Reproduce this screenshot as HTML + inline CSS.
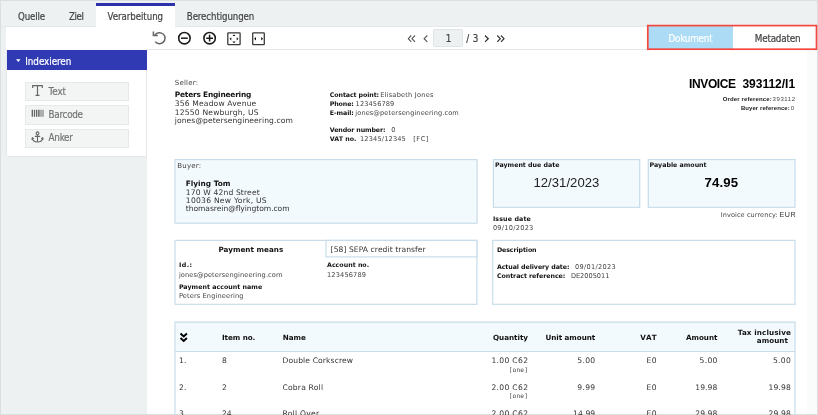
<!DOCTYPE html>
<html lang="de">
<head>
<meta charset="utf-8">
<title>Verarbeitung</title>
<style>
html,body{margin:0;padding:0}
body{width:818px;height:415px;overflow:hidden;background:#eef1f2;position:relative;font-family:'DejaVu Sans Condensed','DejaVu Sans','Liberation Sans',sans-serif}
.abs,.t{position:absolute}
.t{white-space:nowrap;line-height:1;-webkit-text-stroke:0.2px currentColor;font-family:'DejaVu Sans Condensed','DejaVu Sans','Liberation Sans',sans-serif}
#frame{left:0;top:0;width:816px;height:413px;border:1px solid #dcdfe0;pointer-events:none}
#tabbar{left:1px;top:1px;width:816px;height:25px;background:#eef1f2;border-bottom:1px solid #e6e9eb}
#tabactive{left:96px;top:3px;width:79px;height:24px;background:#fff;border-top:3px solid #2d31ae;box-sizing:border-box}
#toolbar{left:6px;top:27px;width:811px;height:23px;background:#fff}
#tbline{left:147px;top:49px;width:670px;height:1px;background:#e6e9eb}
#leftpanel{left:6px;top:50px;width:141px;height:107px;background:#fff;border:1px solid #e4e7e9;border-top:0;box-sizing:border-box;border-radius:0 0 2px 2px}
#lphead{left:6.5px;top:50px;width:140.5px;height:20px;background:#303ab2}
.btn{left:25px;width:104px;height:19px;background:#f3f5f5;border:1px solid #e6e9ea;box-sizing:border-box}
#doc{left:147px;top:50px;width:670px;height:364px;background:#fff}
#scroll{left:807px;top:50px;width:10px;height:364px;background:#fafbfb}
#pageinput{left:433px;top:29px;width:30px;height:18px;background:#eef1f2;border:1px solid #e0e4e6;border-radius:2px;box-sizing:border-box}
#redbox{left:647px;top:25px;width:170px;height:25px;background:#fff}
#dokbtn{left:648px;top:26px;width:85px;height:23px;background:#abdbf5}
svg{position:absolute;left:0;top:0}
</style>
</head>
<body>
<div class="abs" id="tabbar"></div>
<div class="abs" id="tabactive"></div>
<div class="abs" id="toolbar"></div>
<div class="abs" id="doc"></div>
<div class="abs" id="scroll"></div>
<div class="abs" id="tbline"></div>
<div class="abs" id="leftpanel"></div>
<div class="abs" id="lphead"></div>
<div class="abs btn" style="top:82px"></div>
<div class="abs btn" style="top:105px;height:20px"></div>
<div class="abs btn" style="top:129px"></div>
<div class="abs" id="pageinput"></div>
<div class="abs" id="redbox"></div>
<div class="abs" id="dokbtn"></div>
<div class="abs" id="frame"></div>
<div class="abs" id="uitext" style="left:0;top:0;width:818px;height:415px;will-change:transform">
<span class="t" style="left:18.0px;top:11.60px;font-size:9.6px;color:#444;letter-spacing:-0.138px">Quelle</span>
<span class="t" style="left:69.0px;top:11.60px;font-size:9.6px;color:#444;letter-spacing:-0.344px">Ziel</span>
<span class="t" style="left:107.6px;top:11.60px;font-size:9.6px;color:#444;letter-spacing:-0.033px">Verarbeitung</span>
<span class="t" style="left:186.8px;top:11.60px;font-size:9.6px;color:#444;letter-spacing:-0.083px">Berechtigungen</span>
<span class="t" style="left:25.3px;top:56.60px;font-size:9.8px;color:#fff;letter-spacing:-0.061px">Indexieren</span>
<span class="t" style="left:48.6px;top:86.90px;font-size:9.8px;color:#757575;letter-spacing:-0.080px">Text</span>
<span class="t" style="left:48.6px;top:109.70px;font-size:9.8px;color:#757575;letter-spacing:-0.288px">Barcode</span>
<span class="t" style="left:48.6px;top:132.80px;font-size:9.8px;color:#757575;letter-spacing:-0.280px">Anker</span>
<span class="t" style="left:466.2px;top:33.90px;font-size:9.8px;color:#444;letter-spacing:0.455px">/ 3</span>
<span class="t" style="left:445.8px;top:33.90px;font-size:9.8px;color:#444;letter-spacing:-1.009px">1</span>
<span class="t" style="left:668.4px;top:34.10px;font-size:9.8px;color:#fff;letter-spacing:-0.189px">Dokument</span>
<span class="t" style="left:754.8px;top:34.10px;font-size:9.8px;color:#444;letter-spacing:-0.207px">Metadaten</span>
</div>
<svg width="818" height="415" viewBox="0 0 818 415">
<!-- highlight frame -->
<rect x="647.8" y="25.6" width="168.7" height="23.6" fill="none" stroke="#f4483e" stroke-width="1.7"/>
<!-- UI icons -->
<g id="icons" fill="none" stroke="#111" stroke-width="1.5">
<path d="M16 59.3h4.6l-2.3 2.6z" fill="#fff" stroke="none"/>
<!-- rotate -->
<path d="M155.0 35.0a5.5 5.5 0 1 1 0.2 6.6" stroke="#666" stroke-width="1.5"/>
<path d="M153.4 31.4v4.2h4.4" stroke="#666" stroke-width="1.5"/>
<!-- zoom out -->
<g stroke="#1a1a1a" stroke-width="1.6">
<circle cx="184.4" cy="38.2" r="5.7"/><path d="M181 38.2h6.8" stroke-width="1.5"/>
<!-- zoom in -->
<circle cx="209.6" cy="38.2" r="5.7"/><path d="M206.2 38.2h6.8M209.6 34.8v6.8" stroke-width="1.5"/>
</g>
<!-- fit page -->
<rect x="227.8" y="32.9" width="12.3" height="11.7" rx="0.6" stroke="#3a3a3a" stroke-width="1.3"/>
<path d="M232.4 36.1l1.6-1.7 1.6 1.7zM232.4 41.5l1.6 1.7 1.6-1.7zM231.3 37.2l-1.7 1.6 1.7 1.6zM236.7 37.2l1.7 1.6-1.7 1.6z" fill="#111" stroke="none"/>
<!-- fit width -->
<rect x="252.7" y="32.9" width="11.6" height="11.7" rx="0.6" stroke="#3a3a3a" stroke-width="1.3"/>
<path d="M256 37.1l-1.9 1.7 1.9 1.7zM261.2 37.1l1.9 1.7-1.9 1.7z" fill="#111" stroke="none"/>
<!-- pager -->
<g stroke="#555" stroke-width="1.1">
<path d="M411.3 35.5l-3 3.2 3 3.2M415 35.5l-3 3.2 3 3.2"/>
<path d="M427.3 35.5l-3.2 3.2 3.2 3.2"/>
<path d="M485 35.5l3.2 3.2-3.2 3.2" stroke="#333" stroke-width="1.3"/>
<path d="M497.3 35.5l3 3.2-3 3.2M501 35.5l3 3.2-3 3.2" stroke="#333" stroke-width="1.2"/>
</g>
<!-- T icon -->
<g stroke="#666" stroke-width="1.1">
<path d="M32.7 87.9v-2.2h9.6v2.2M37.5 85.7v9.5M35.5 95.3h4" stroke-width="1.2"/>
<!-- barcode -->
<path d="M32.4 109.8v7M36.6 109.8v7M38.9 109.8v7" stroke-width="1.5"/><path d="M34.5 109.8v7M41 109.8v7M43 109.8v7" stroke-width="1"/>
<!-- anchor -->
<circle cx="37.5" cy="133.3" r="1.4"/>
<path d="M37.5 134.7v7.2M34.8 136.4h5.4M32.2 138.2c0.4 2.6 2.6 3.8 5.3 3.8s4.9-1.2 5.3-3.8M31.6 139.4l0.8-1.6 1.4 1M43.4 139.4l-0.8-1.6-1.4 1"/>
</g>
</g>
<!-- document -->
<g id="document">
<text x="174.8" y="84.5" font-family="'DejaVu Sans','Liberation Sans',sans-serif" font-size="7.0" fill="#444" textLength="23.3" lengthAdjust="spacing">Seller:</text>
<text x="174.8" y="97.0" font-family="'DejaVu Sans','Liberation Sans',sans-serif" font-size="7.4" font-weight="700" fill="#111" textLength="76.5" lengthAdjust="spacing">Peters Engineering</text>
<text x="174.8" y="105.8" font-family="'DejaVu Sans','Liberation Sans',sans-serif" font-size="7.6" fill="#333" textLength="81.5" lengthAdjust="spacing">356 Meadow Avenue</text>
<text x="174.8" y="114.5" font-family="'DejaVu Sans','Liberation Sans',sans-serif" font-size="7.6" fill="#333" textLength="83.7" lengthAdjust="spacing">12550 Newburgh, US</text>
<text x="174.8" y="123.0" font-family="'DejaVu Sans','Liberation Sans',sans-serif" font-size="7.6" fill="#333" textLength="118.0" lengthAdjust="spacing">jones@petersengineering.com</text>
<text x="329.8" y="96.6" font-family="'DejaVu Sans','Liberation Sans',sans-serif" font-size="6.3" font-weight="700" fill="#111" textLength="49.3" lengthAdjust="spacing">Contact point:</text>
<text x="380.2" y="96.6" font-family="'DejaVu Sans','Liberation Sans',sans-serif" font-size="6.6" fill="#444" textLength="53.2" lengthAdjust="spacing">Elisabeth Jones</text>
<text x="329.8" y="106.0" font-family="'DejaVu Sans','Liberation Sans',sans-serif" font-size="6.3" font-weight="700" fill="#111" textLength="24.0" lengthAdjust="spacing">Phone:</text>
<text x="355.6" y="106.0" font-family="'DejaVu Sans','Liberation Sans',sans-serif" font-size="6.6" fill="#444" textLength="38.7" lengthAdjust="spacing">123456789</text>
<text x="329.8" y="114.5" font-family="'DejaVu Sans','Liberation Sans',sans-serif" font-size="6.3" font-weight="700" fill="#111" textLength="24.1" lengthAdjust="spacing">E-mail:</text>
<text x="355.3" y="114.5" font-family="'DejaVu Sans','Liberation Sans',sans-serif" font-size="6.6" fill="#444" textLength="103.5" lengthAdjust="spacing">jones@petersengineering.com</text>
<text x="329.8" y="132.0" font-family="'DejaVu Sans','Liberation Sans',sans-serif" font-size="6.3" font-weight="700" fill="#111" textLength="55.7" lengthAdjust="spacing">Vendor number:</text>
<text x="391.3" y="132.0" font-family="'DejaVu Sans','Liberation Sans',sans-serif" font-size="6.6" fill="#444" textLength="4.1" lengthAdjust="spacing">0</text>
<text x="329.8" y="140.9" font-family="'DejaVu Sans','Liberation Sans',sans-serif" font-size="6.3" font-weight="700" fill="#111" textLength="26.7" lengthAdjust="spacing">VAT no.</text>
<text x="360.0" y="140.9" font-family="'DejaVu Sans','Liberation Sans',sans-serif" font-size="6.6" fill="#444" textLength="45.8" lengthAdjust="spacing">12345/12345</text>
<text x="413.3" y="140.9" font-family="'DejaVu Sans','Liberation Sans',sans-serif" font-size="6.6" fill="#444" textLength="15.0" lengthAdjust="spacing">[FC]</text>
<text x="689.0" y="87.8" font-family="'Liberation Sans','DejaVu Sans',sans-serif" font-size="12.0" font-weight="700" fill="#000" textLength="47.1" lengthAdjust="spacing">INVOICE</text>
<text x="742.4" y="87.8" font-family="'Liberation Sans','DejaVu Sans',sans-serif" font-size="12.0" font-weight="700" fill="#000" textLength="52.7" lengthAdjust="spacing">393112/I1</text>
<text x="722.7" y="101.3" font-family="'Liberation Sans','DejaVu Sans',sans-serif" font-size="6.0" font-weight="700" fill="#222" textLength="49.1" lengthAdjust="spacing">Order reference:</text>
<text x="772.6" y="101.3" font-family="'Liberation Sans','DejaVu Sans',sans-serif" font-size="6.0" fill="#444" textLength="22.5" lengthAdjust="spacing">393112</text>
<text x="740.9" y="110.3" font-family="'Liberation Sans','DejaVu Sans',sans-serif" font-size="6.0" font-weight="700" fill="#222" textLength="48.8" lengthAdjust="spacing">Buyer reference:</text>
<text x="790.8" y="110.3" font-family="'Liberation Sans','DejaVu Sans',sans-serif" font-size="6.0" fill="#444" textLength="3.9" lengthAdjust="spacing">0</text>
<rect x="175.0" y="159.6" width="302.0" height="63.6" fill="#f3fafe" stroke="#c8dce9" stroke-width="1.2"/>
<text x="177.3" y="167.7" font-family="'DejaVu Sans','Liberation Sans',sans-serif" font-size="7.0" fill="#444" textLength="23.7" lengthAdjust="spacing">Buyer:</text>
<text x="185.8" y="185.8" font-family="'DejaVu Sans','Liberation Sans',sans-serif" font-size="7.4" font-weight="700" fill="#111" textLength="44.6" lengthAdjust="spacing">Flying Tom</text>
<text x="185.8" y="194.5" font-family="'DejaVu Sans','Liberation Sans',sans-serif" font-size="7.6" fill="#333" textLength="73.9" lengthAdjust="spacing">170 W 42nd Street</text>
<text x="185.8" y="202.8" font-family="'DejaVu Sans','Liberation Sans',sans-serif" font-size="7.6" fill="#333" textLength="80.9" lengthAdjust="spacing">10036 New York, US</text>
<text x="185.8" y="211.3" font-family="'DejaVu Sans','Liberation Sans',sans-serif" font-size="7.6" fill="#333" textLength="103.8" lengthAdjust="spacing">thomasrein@flyingtom.com</text>
<rect x="493.4" y="159.6" width="146.3" height="47.7" fill="#f3fafe" stroke="#c8dce9" stroke-width="1.2"/>
<text x="495.0" y="166.6" font-family="'DejaVu Sans','Liberation Sans',sans-serif" font-size="6.3" font-weight="700" fill="#111" textLength="64.5" lengthAdjust="spacing">Payment due date</text>
<text x="533.4" y="187.4" font-family="'Liberation Sans','DejaVu Sans',sans-serif" font-size="13.1" fill="#222" textLength="66.0" lengthAdjust="spacing">12/31/2023</text>
<text x="492.9" y="220.7" font-family="'DejaVu Sans','Liberation Sans',sans-serif" font-size="6.3" font-weight="700" fill="#111" textLength="37.9" lengthAdjust="spacing">Issue date</text>
<text x="492.9" y="230.2" font-family="'DejaVu Sans','Liberation Sans',sans-serif" font-size="6.6" fill="#444" textLength="40.4" lengthAdjust="spacing">09/10/2023</text>
<rect x="648.3" y="159.6" width="146.7" height="47.7" fill="#f3fafe" stroke="#c8dce9" stroke-width="1.2"/>
<text x="649.6" y="166.6" font-family="'DejaVu Sans','Liberation Sans',sans-serif" font-size="6.3" font-weight="700" fill="#111" textLength="57.0" lengthAdjust="spacing">Payable amount</text>
<text x="704.6" y="187.4" font-family="'Liberation Sans','DejaVu Sans',sans-serif" font-size="13.2" font-weight="700" fill="#000" textLength="33.5" lengthAdjust="spacing">74.95</text>
<text x="720.7" y="217.2" font-family="'DejaVu Sans','Liberation Sans',sans-serif" font-size="6.5" fill="#444" textLength="57.1" lengthAdjust="spacing">Invoice currency:</text>
<text x="779.5" y="217.2" font-family="'Liberation Sans','DejaVu Sans',sans-serif" font-size="7.2" fill="#333" textLength="16.1" lengthAdjust="spacing">EUR</text>
<rect x="175.0" y="240.4" width="301.9" height="63.9" fill="#fff" stroke="#c8dce9" stroke-width="1.2"/>
<rect x="326.0" y="240.4" width="150.9" height="16.5" fill="#fff" stroke="#c8dce9" stroke-width="1.2"/>
<text x="218.4" y="251.8" font-family="'DejaVu Sans','Liberation Sans',sans-serif" font-size="7.2" font-weight="700" fill="#111" textLength="64.8" lengthAdjust="spacing">Payment means</text>
<text x="330.6" y="251.8" font-family="'DejaVu Sans','Liberation Sans',sans-serif" font-size="7.6" fill="#333" textLength="95.1" lengthAdjust="spacing">[58] SEPA credit transfer</text>
<text x="178.9" y="267.2" font-family="'DejaVu Sans','Liberation Sans',sans-serif" font-size="6.3" font-weight="700" fill="#111" textLength="13.2" lengthAdjust="spacing">Id.:</text>
<text x="178.9" y="276.6" font-family="'DejaVu Sans','Liberation Sans',sans-serif" font-size="6.6" fill="#444" textLength="103.5" lengthAdjust="spacing">jones@petersengineering.com</text>
<text x="178.9" y="288.6" font-family="'DejaVu Sans','Liberation Sans',sans-serif" font-size="6.3" font-weight="700" fill="#111" textLength="83.3" lengthAdjust="spacing">Payment account name</text>
<text x="178.9" y="298.2" font-family="'DejaVu Sans','Liberation Sans',sans-serif" font-size="6.6" fill="#444" textLength="64.6" lengthAdjust="spacing">Peters Engineering</text>
<text x="327.0" y="267.2" font-family="'DejaVu Sans','Liberation Sans',sans-serif" font-size="6.3" font-weight="700" fill="#111" textLength="42.1" lengthAdjust="spacing">Account no.</text>
<text x="327.0" y="276.6" font-family="'DejaVu Sans','Liberation Sans',sans-serif" font-size="6.6" fill="#444" textLength="39.0" lengthAdjust="spacing">123456789</text>
<rect x="492.7" y="240.4" width="302.3" height="63.9" fill="#fff" stroke="#c8dce9" stroke-width="1.2"/>
<text x="496.9" y="251.8" font-family="'DejaVu Sans','Liberation Sans',sans-serif" font-size="6.3" font-weight="700" fill="#111" textLength="39.7" lengthAdjust="spacing">Description</text>
<text x="496.9" y="268.9" font-family="'DejaVu Sans','Liberation Sans',sans-serif" font-size="6.3" font-weight="700" fill="#111" textLength="72.6" lengthAdjust="spacing">Actual delivery date:</text>
<text x="575.0" y="268.9" font-family="'DejaVu Sans','Liberation Sans',sans-serif" font-size="6.6" fill="#444" textLength="40.6" lengthAdjust="spacing">09/01/2023</text>
<text x="496.9" y="277.6" font-family="'DejaVu Sans','Liberation Sans',sans-serif" font-size="6.3" font-weight="700" fill="#111" textLength="68.4" lengthAdjust="spacing">Contract reference:</text>
<text x="570.9" y="277.6" font-family="'DejaVu Sans','Liberation Sans',sans-serif" font-size="6.6" fill="#444" textLength="38.5" lengthAdjust="spacing">DE2005011</text>
<rect x="175" y="322.1" width="620" height="29.4" fill="#f3fafe"/>
<path d="M175 415V322.1H795V415M175 351.5H795" fill="none" stroke="#c8dce9" stroke-width="1.2"/>
<path d="M180.5 333.5l3.2 3 3.2-3M180.5 338l3.2 3 3.2-3" fill="none" stroke="#000" stroke-width="2"/>
<text x="222.0" y="339.6" font-family="'DejaVu Sans','Liberation Sans',sans-serif" font-size="7.2" font-weight="700" fill="#111" textLength="33.3" lengthAdjust="spacing">Item no.</text>
<text x="282.7" y="339.6" font-family="'DejaVu Sans','Liberation Sans',sans-serif" font-size="7.2" font-weight="700" fill="#111" textLength="23.2" lengthAdjust="spacing">Name</text>
<text x="493.0" y="339.6" font-family="'DejaVu Sans','Liberation Sans',sans-serif" font-size="7.2" font-weight="700" fill="#111" textLength="35.0" lengthAdjust="spacing">Quantity</text>
<text x="545.5" y="339.6" font-family="'DejaVu Sans','Liberation Sans',sans-serif" font-size="7.2" font-weight="700" fill="#111" textLength="49.7" lengthAdjust="spacing">Unit amount</text>
<text x="640.3" y="339.6" font-family="'DejaVu Sans','Liberation Sans',sans-serif" font-size="7.2" font-weight="700" fill="#111" textLength="16.4" lengthAdjust="spacing">VAT</text>
<text x="686.0" y="339.6" font-family="'DejaVu Sans','Liberation Sans',sans-serif" font-size="7.2" font-weight="700" fill="#111" textLength="31.4" lengthAdjust="spacing">Amount</text>
<text x="737.8" y="334.7" font-family="'DejaVu Sans','Liberation Sans',sans-serif" font-size="7.2" font-weight="700" fill="#111" textLength="53.0" lengthAdjust="spacing">Tax inclusive</text>
<text x="756.8" y="342.7" font-family="'DejaVu Sans','Liberation Sans',sans-serif" font-size="7.2" font-weight="700" fill="#111" textLength="31.1" lengthAdjust="spacing">amount</text>
<text x="179.0" y="362.7" font-family="'DejaVu Sans','Liberation Sans',sans-serif" font-size="7.6" fill="#333" textLength="7.5" lengthAdjust="spacing">1.</text>
<text x="222.0" y="362.7" font-family="'DejaVu Sans','Liberation Sans',sans-serif" font-size="7.6" fill="#333" textLength="5.1" lengthAdjust="spacing">8</text>
<text x="282.5" y="362.7" font-family="'DejaVu Sans','Liberation Sans',sans-serif" font-size="7.6" fill="#333" textLength="70.5" lengthAdjust="spacing">Double Corkscrew</text>
<text x="491.4" y="362.7" font-family="'DejaVu Sans','Liberation Sans',sans-serif" font-size="7.6" fill="#333" textLength="36.6" lengthAdjust="spacing">1.00 C62</text>
<text x="508.7" y="372.3" font-family="'DejaVu Sans Mono','Liberation Mono',monospace" font-size="6.2" fill="#444" textLength="19.3" lengthAdjust="spacing">[one]</text>
<text x="577.3" y="362.7" font-family="'DejaVu Sans','Liberation Sans',sans-serif" font-size="7.6" fill="#333" textLength="17.9" lengthAdjust="spacing">5.00</text>
<text x="646.6" y="362.7" font-family="'DejaVu Sans','Liberation Sans',sans-serif" font-size="7.6" fill="#333" textLength="10.1" lengthAdjust="spacing">E0</text>
<text x="699.5" y="362.7" font-family="'DejaVu Sans','Liberation Sans',sans-serif" font-size="7.6" fill="#333" textLength="17.9" lengthAdjust="spacing">5.00</text>
<text x="772.9" y="362.7" font-family="'DejaVu Sans','Liberation Sans',sans-serif" font-size="7.6" fill="#333" textLength="17.9" lengthAdjust="spacing">5.00</text>
<text x="179.0" y="389.7" font-family="'DejaVu Sans','Liberation Sans',sans-serif" font-size="7.6" fill="#333" textLength="7.5" lengthAdjust="spacing">2.</text>
<text x="222.0" y="389.7" font-family="'DejaVu Sans','Liberation Sans',sans-serif" font-size="7.6" fill="#333" textLength="5.1" lengthAdjust="spacing">2</text>
<text x="282.5" y="389.7" font-family="'DejaVu Sans','Liberation Sans',sans-serif" font-size="7.6" fill="#333" textLength="40.5" lengthAdjust="spacing">Cobra Roll</text>
<text x="491.4" y="389.7" font-family="'DejaVu Sans','Liberation Sans',sans-serif" font-size="7.6" fill="#333" textLength="36.6" lengthAdjust="spacing">2.00 C62</text>
<text x="508.7" y="398.3" font-family="'DejaVu Sans Mono','Liberation Mono',monospace" font-size="6.2" fill="#444" textLength="19.3" lengthAdjust="spacing">[one]</text>
<text x="577.3" y="389.7" font-family="'DejaVu Sans','Liberation Sans',sans-serif" font-size="7.6" fill="#333" textLength="17.9" lengthAdjust="spacing">9.99</text>
<text x="646.6" y="389.7" font-family="'DejaVu Sans','Liberation Sans',sans-serif" font-size="7.6" fill="#333" textLength="10.1" lengthAdjust="spacing">E0</text>
<text x="695.2" y="389.7" font-family="'DejaVu Sans','Liberation Sans',sans-serif" font-size="7.6" fill="#333" textLength="22.2" lengthAdjust="spacing">19.98</text>
<text x="768.6" y="389.7" font-family="'DejaVu Sans','Liberation Sans',sans-serif" font-size="7.6" fill="#333" textLength="22.2" lengthAdjust="spacing">19.98</text>
<text x="179.0" y="416.2" font-family="'DejaVu Sans','Liberation Sans',sans-serif" font-size="7.6" fill="#333" textLength="7.5" lengthAdjust="spacing">3.</text>
<text x="222.0" y="416.2" font-family="'DejaVu Sans','Liberation Sans',sans-serif" font-size="7.6" fill="#333" textLength="9.7" lengthAdjust="spacing">24</text>
<text x="282.5" y="416.2" font-family="'DejaVu Sans','Liberation Sans',sans-serif" font-size="7.6" fill="#333" textLength="36.5" lengthAdjust="spacing">Roll Over</text>
<text x="491.4" y="416.2" font-family="'DejaVu Sans','Liberation Sans',sans-serif" font-size="7.6" fill="#333" textLength="36.6" lengthAdjust="spacing">2.00 C62</text>
<text x="508.7" y="424.8" font-family="'DejaVu Sans Mono','Liberation Mono',monospace" font-size="6.2" fill="#444" textLength="19.3" lengthAdjust="spacing">[one]</text>
<text x="573.0" y="416.2" font-family="'DejaVu Sans','Liberation Sans',sans-serif" font-size="7.6" fill="#333" textLength="22.2" lengthAdjust="spacing">14.99</text>
<text x="646.6" y="416.2" font-family="'DejaVu Sans','Liberation Sans',sans-serif" font-size="7.6" fill="#333" textLength="10.1" lengthAdjust="spacing">E0</text>
<text x="695.2" y="416.2" font-family="'DejaVu Sans','Liberation Sans',sans-serif" font-size="7.6" fill="#333" textLength="22.2" lengthAdjust="spacing">29.98</text>
<text x="768.6" y="416.2" font-family="'DejaVu Sans','Liberation Sans',sans-serif" font-size="7.6" fill="#333" textLength="22.2" lengthAdjust="spacing">29.98</text>
</g>
</svg>
</body>
</html>
